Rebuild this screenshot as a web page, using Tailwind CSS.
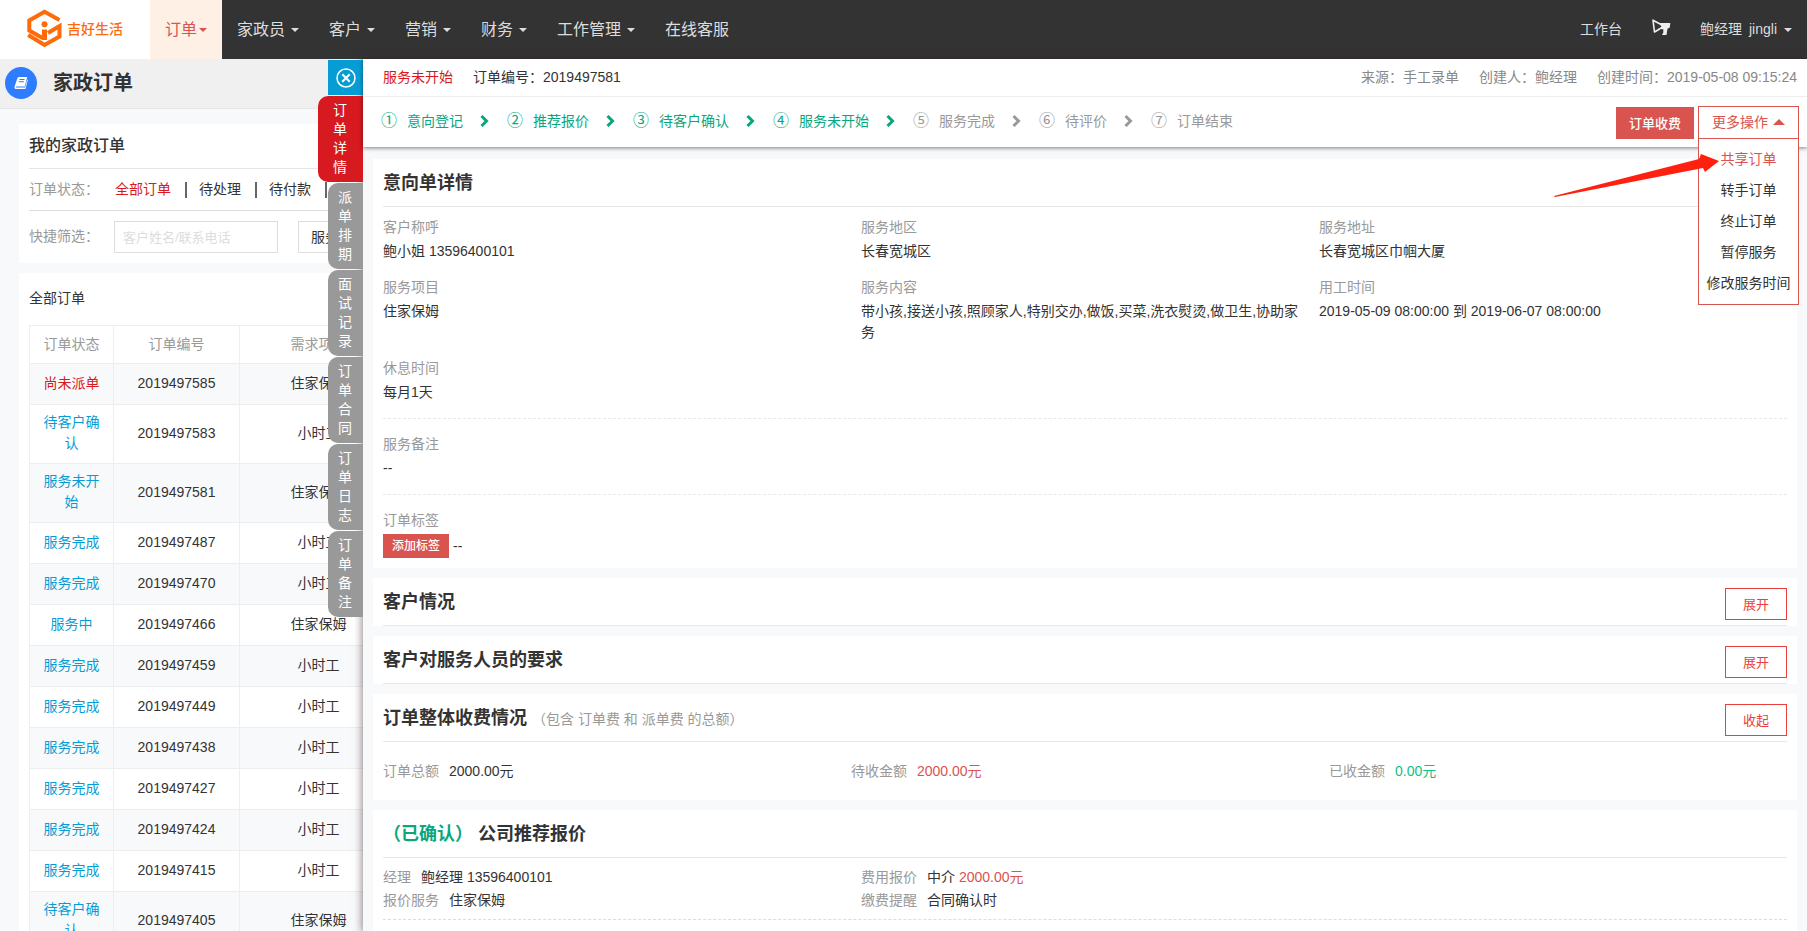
<!DOCTYPE html>
<html lang="zh-CN">
<head>
<meta charset="utf-8">
<title>家政订单</title>
<script src="https://cdn.jsdelivr.net/npm/@tailwindcss/browser@4"></script>
</head>
<body class="flex h-screen flex-col overflow-hidden bg-[#f8f9fb] font-['Liberation_Sans','Noto_Sans_CJK_SC',sans-serif] text-sm leading-[21px] text-[#333]">

<header class="flex h-[59px] shrink-0 items-stretch bg-[#333] text-[#ddd]">
  <a href="#" class="flex w-[150px] items-center gap-[5px] bg-white pb-0.5 pl-[27px] text-[#ff6a0a]">
    <svg class="h-[40px] w-[35px] shrink-0" viewBox="0 0 35 40" fill="none" stroke="#ff6a0a" stroke-width="4">
      <path d="M32.500 11L17.500 2.800L2.300 11.500V21.500L15.500 29"/>
      <path d="M1.200 26L17.500 36L32.500 27.500V17L21 24"/>
      <path stroke-width="5" d="M17.500 20.500V31"/>
      <circle cx="17.500" cy="15.300" r="3" fill="#ff6a0a" stroke="none"/>
    </svg>
    <span class="text-sm font-medium">吉好生活</span>
  </a>
  <nav class="flex flex-1 items-stretch text-base">
    <a href="#" class="flex items-center gap-0.5 bg-[#fff0e6] px-[15px] text-[#d9534f]">订单<svg class="h-1 w-2" viewBox="0 0 8 4" fill="currentColor"><path d="M0 0h8L4 4z"/></svg></a>
    <a href="#" class="flex items-center gap-1.5 px-[15px]">家政员<svg class="h-1 w-2" viewBox="0 0 8 4" fill="currentColor"><path d="M0 0h8L4 4z"/></svg></a>
    <a href="#" class="flex items-center gap-1.5 px-[15px]">客户<svg class="h-1 w-2" viewBox="0 0 8 4" fill="currentColor"><path d="M0 0h8L4 4z"/></svg></a>
    <a href="#" class="flex items-center gap-1.5 px-[15px]">营销<svg class="h-1 w-2" viewBox="0 0 8 4" fill="currentColor"><path d="M0 0h8L4 4z"/></svg></a>
    <a href="#" class="flex items-center gap-1.5 px-[15px]">财务<svg class="h-1 w-2" viewBox="0 0 8 4" fill="currentColor"><path d="M0 0h8L4 4z"/></svg></a>
    <a href="#" class="flex items-center gap-1.5 px-[15px]">工作管理<svg class="h-1 w-2" viewBox="0 0 8 4" fill="currentColor"><path d="M0 0h8L4 4z"/></svg></a>
    <a href="#" class="flex items-center px-[15px]">在线客服</a>
  </nav>
  <div class="flex items-stretch">
    <a href="#" class="flex items-center px-[15px]">工作台</a>
    <a href="#" aria-label="通知" class="flex items-center px-[14px] pb-1">
      <svg class="h-[18px] w-[20px]" viewBox="0 0 20 18" fill="none" stroke="#eee">
        <path stroke-width="1.600" stroke-linejoin="round" d="M9 5L2 1.200L3.500 13L9 9.800"/>
        <path fill="#eee" stroke="none" d="M7.500 4L19.300 4L18.800 8.500L16.500 9.800L15.500 16L11 16L12.300 13.500L12.300 10.300L7.500 10L10.500 7.500z"/>
      </svg>
    </a>
    <a href="#" class="flex items-center gap-[7px] px-[15px]"><span>鲍经理</span><span>jingli</span><svg class="h-1 w-2" viewBox="0 0 8 4" fill="currentColor"><path d="M0 0h8L4 4z"/></svg></a>
  </div>
</header>

<div class="relative min-h-0 flex-1">
  <main class="h-full overflow-hidden">
    <div class="flex h-[50px] items-center gap-4 border-b border-[#e5e5e5] bg-[#f0f0f0] px-[5px] pb-px">
      <span class="flex size-8 items-center justify-center rounded-full bg-[#2f7dff]">
        <svg class="h-3.5 w-3.5" viewBox="0 0 14 14"><path fill="#fff" d="M4.500 1H13.200L10.700 10.500H2.500Q1.500 10.500 2 11.600H11L13.300 3.500L13.900 3.800L11.600 12.500Q11.400 13 10.800 13H1.500Q0 12.500.6 10.500L3.500 2Q3.800 1 4.500 1z"/><path stroke="#2f7dff" d="M5.500 3.500H10.500M4.900 5.700H9.900"/></svg>
      </span>
      <h1 class="text-xl font-bold">家政订单</h1>
    </div>

    <div class="flex flex-col gap-2.5 py-[15px] pr-5 pl-[19px]">
      <section class="bg-white px-2.5 pb-2.5">
        <h2 class="flex h-[45px] items-center border-b border-[#e5e5e5] text-base font-medium">我的家政订单</h2>
        <div class="flex h-[42px] items-center border-b border-[#ddd]">
          <span class="w-[86px] text-[#999]">订单状态：</span>
          <a href="#" class="text-[#d71920]">全部订单</a>
          <span class="mr-3 ml-3.5 h-4 w-0.5 bg-[#666]"></span>
          <a href="#">待处理</a>
          <span class="mr-3 ml-3.5 h-4 w-0.5 bg-[#666]"></span>
          <a href="#">待付款</a>
          <span class="mr-3 ml-3.5 h-4 w-0.5 bg-[#666]"></span>
        </div>
        <div class="flex items-center pt-2.5">
          <label for="q" class="w-[85px] pb-0.5 text-[#999]">快捷筛选：</label>
          <input id="q" type="text" placeholder="客户姓名/联系电话" class="mr-5 h-8 w-[164px] border border-[#ddd] px-2 text-[13px] placeholder:text-[#ddd]">
          <select aria-label="服务" class="h-8 w-[120px] border border-[#ddd] px-2"><option>服务项目</option></select>
        </div>
      </section>

      <section class="bg-white px-2.5 pb-2.5">
        <h2 class="flex h-[52px] items-center pb-0.5">全部订单</h2>
        <table class="w-full table-fixed border-collapse text-center [&_td]:h-[41px] [&_td]:border [&_td]:border-[#eee] [&_td]:px-2 [&_td]:pt-[7px] [&_td]:pb-[9px] [&_th]:h-[38px] [&_th]:border [&_th]:border-[#eee] [&_th]:font-normal [&_th]:text-[#999] [&_tbody_tr:nth-child(odd)]:bg-[#f8f9fb]">
          <colgroup><col class="w-[84px]"><col class="w-[126px]"><col class="w-[158px]"><col></colgroup>
          <thead><tr><th>订单状态</th><th>订单编号</th><th>需求项目</th><th></th></tr></thead>
          <tbody>
            <tr><td class="text-[#d71920]">尚未派单</td><td>2019497585</td><td>住家保姆</td><td></td></tr>
            <tr><td class="text-[#069dd5]">待客户确认</td><td>2019497583</td><td>小时工</td><td></td></tr>
            <tr><td class="text-[#069dd5]">服务未开始</td><td>2019497581</td><td>住家保姆</td><td></td></tr>
            <tr><td class="text-[#069dd5]">服务完成</td><td>2019497487</td><td>小时工</td><td></td></tr>
            <tr><td class="text-[#069dd5]">服务完成</td><td>2019497470</td><td>小时工</td><td></td></tr>
            <tr><td class="text-[#069dd5]">服务中</td><td>2019497466</td><td>住家保姆</td><td></td></tr>
            <tr><td class="text-[#069dd5]">服务完成</td><td>2019497459</td><td>小时工</td><td></td></tr>
            <tr><td class="text-[#069dd5]">服务完成</td><td>2019497449</td><td>小时工</td><td></td></tr>
            <tr><td class="text-[#069dd5]">服务完成</td><td>2019497438</td><td>小时工</td><td></td></tr>
            <tr><td class="text-[#069dd5]">服务完成</td><td>2019497427</td><td>小时工</td><td></td></tr>
            <tr><td class="text-[#069dd5]">服务完成</td><td>2019497424</td><td>小时工</td><td></td></tr>
            <tr><td class="text-[#069dd5]">服务完成</td><td>2019497415</td><td>小时工</td><td></td></tr>
            <tr><td class="text-[#069dd5]">待客户确认</td><td>2019497405</td><td>住家保姆</td><td></td></tr>
          </tbody>
        </table>
      </section>
    </div>
  </main>

  <!-- Order drawer, laid over the list -->
  <aside class="absolute inset-y-0 right-0 left-[363px] flex flex-col bg-[#f8f9fb] shadow-[0_0_8px_1px_rgba(70,50,50,0.6)]">
    <div class="absolute top-px right-full flex flex-col items-end gap-px leading-[19px] text-white">
      <button aria-label="关闭" class="flex size-[35px] items-center justify-center bg-[#069dd5]">
        <svg class="size-5" viewBox="0 0 20 20" fill="none" stroke="#fff" stroke-width="1.500"><circle cx="10" cy="10" r="9"/><path stroke-width="2" d="M6.300 6.300l7.400 7.400M13.700 6.300l-7.400 7.400"/></svg>
      </button>
      <button class="w-[45px] rounded-l-[10px] bg-[#d71920] py-[5px] pr-4 pl-[15px]">订单详情</button>
      <button class="w-[35px] rounded-l-[10px] bg-[#999] py-[5px] pr-[11px] pl-2.5">派单排期</button>
      <button class="w-[35px] rounded-l-[10px] bg-[#999] py-[5px] pr-[11px] pl-2.5">面试记录</button>
      <button class="w-[35px] rounded-l-[10px] bg-[#999] py-[5px] pr-[11px] pl-2.5">订单合同</button>
      <button class="w-[35px] rounded-l-[10px] bg-[#999] py-[5px] pr-[11px] pl-2.5">订单日志</button>
      <button class="w-[35px] rounded-l-[10px] bg-[#999] py-[5px] pr-[11px] pl-2.5">订单备注</button>
    </div>

    <div class="relative z-10 shrink-0 bg-white shadow-[0_1px_4px_rgba(0,0,0,0.5)]">
      <div class="flex h-[38px] items-center border-b border-[#eee] pr-2.5 pl-5">
        <span class="mr-5 text-[#d71920]">服务未开始</span>
        <span>订单编号：2019497581</span>
        <div class="ml-auto flex gap-5 text-[#888]">
          <span>来源：手工录单</span><span>创建人：鲍经理</span><span>创建时间：2019-05-08 09:15:24</span>
        </div>
      </div>
      <div class="flex h-[50px] items-center pr-2 pl-[18px]">
        <ol class="flex items-center gap-[18px] pb-0.5 text-[#999]">
          <li class="flex items-center text-[#0aa67c]"><span class="mr-2.5 text-base">①</span>意向登记<svg class="ml-[17px] h-3 w-[9px]" viewBox="0 0 9 12" fill="none" stroke="currentColor" stroke-width="3"><path d="M1.500 1L6.500 6L1.500 11"/></svg></li>
          <li class="flex items-center text-[#0aa67c]"><span class="mr-2.5 text-base">②</span>推荐报价<svg class="ml-[17px] h-3 w-[9px]" viewBox="0 0 9 12" fill="none" stroke="currentColor" stroke-width="3"><path d="M1.500 1L6.500 6L1.500 11"/></svg></li>
          <li class="flex items-center text-[#0aa67c]"><span class="mr-2.5 text-base">③</span>待客户确认<svg class="ml-[17px] h-3 w-[9px]" viewBox="0 0 9 12" fill="none" stroke="currentColor" stroke-width="3"><path d="M1.500 1L6.500 6L1.500 11"/></svg></li>
          <li class="flex items-center text-[#0aa67c]"><span class="mr-2.5 text-base">④</span>服务未开始<svg class="ml-[17px] h-3 w-[9px]" viewBox="0 0 9 12" fill="none" stroke="currentColor" stroke-width="3"><path d="M1.500 1L6.500 6L1.500 11"/></svg></li>
          <li class="flex items-center"><span class="mr-2.5 text-base">⑤</span>服务完成<svg class="ml-[17px] h-3 w-[9px]" viewBox="0 0 9 12" fill="none" stroke="currentColor" stroke-width="3"><path d="M1.500 1L6.500 6L1.500 11"/></svg></li>
          <li class="flex items-center"><span class="mr-2.5 text-base">⑥</span>待评价<svg class="ml-[17px] h-3 w-[9px]" viewBox="0 0 9 12" fill="none" stroke="currentColor" stroke-width="3"><path d="M1.500 1L6.500 6L1.500 11"/></svg></li>
          <li class="flex items-center"><span class="mr-2.5 text-base">⑦</span>订单结束</li>
        </ol>
        <button class="mt-0.5 ml-auto h-8 w-[78px] bg-[#d9534f] text-[13px] font-medium text-white">订单收费</button>
        <div class="relative ml-1">
          <button class="flex h-[33px] w-[101px] items-center justify-center gap-[5px] border border-[#d9534f] bg-white text-[#d9534f]">更多操作<svg class="h-1.5 w-3" viewBox="0 0 12 6" fill="currentColor"><path d="M0 6h12L6 0z"/></svg></button>
          <ul class="absolute inset-x-0 top-8 border border-[#d9534f] bg-white py-[5px] text-center leading-[31px] whitespace-nowrap">
            <li><a href="#" class="text-[#d9534f]">共享订单</a></li>
            <li><a href="#">转手订单</a></li>
            <li><a href="#">终止订单</a></li>
            <li><a href="#">暂停服务</a></li>
            <li><a href="#">修改服务时间</a></li>
          </ul>
          <svg class="absolute top-[48px] right-[80px] h-11 w-[165px]" viewBox="0 0 165 44" fill="#ff2010"><path d="M0 42L145 5L147 0L165 7L151 18L149 14L1 43z"/></svg>
        </div>
      </div>
    </div>

    <div class="flex min-h-0 flex-1 flex-col gap-2.5 overflow-hidden px-2.5 pt-3 *:shrink-0">
      <section class="bg-white px-2.5 pb-2.5">
        <h2 class="flex h-12 items-center border-b border-[#e8e8e8] text-lg font-bold">意向单详情</h2>
        <dl class="grid grid-cols-[478fr_458fr_468fr] gap-y-[15px] border-b border-dashed border-[#e8e8e8] pt-2.5 pb-[15px] [&_dd]:mt-[3px] [&_dd]:pr-3 [&_dt]:text-[#999]">
          <div><dt>客户称呼</dt><dd>鲍小姐 13596400101</dd></div>
          <div><dt>服务地区</dt><dd>长春宽城区</dd></div>
          <div><dt>服务地址</dt><dd>长春宽城区巾帼大厦</dd></div>
          <div><dt>服务项目</dt><dd>住家保姆</dd></div>
          <div><dt>服务内容</dt><dd>带小孩,接送小孩,照顾家人,特别交办,做饭,买菜,洗衣熨烫,做卫生,协助家务</dd></div>
          <div><dt>用工时间</dt><dd>2019-05-09 08:00:00 到 2019-06-07 08:00:00</dd></div>
          <div><dt>休息时间</dt><dd>每月1天</dd></div>
        </dl>
        <dl class="border-b border-dashed border-[#e8e8e8] py-[15px]"><dt class="text-[#999]">服务备注</dt><dd class="mt-[3px]">--</dd></dl>
        <dl class="pt-[15px]"><dt class="text-[#999]">订单标签</dt><dd class="mt-[3px] flex items-center gap-1"><button class="h-6 w-[66px] bg-[#d9534f] text-xs font-medium text-white">添加标签</button>--</dd></dl>
      </section>

      <section class="bg-white px-2.5">
        <div class="flex h-12 items-center justify-between border-b border-[#e8e8e8]"><h2 class="text-lg font-bold">客户情况</h2><button class="mt-[5px] h-8 w-[62px] border border-[#e8403c] text-[13px] text-[#e8403c]">展开</button></div>
      </section>
      <section class="bg-white px-2.5">
        <div class="flex h-12 items-center justify-between border-b border-[#e8e8e8]"><h2 class="text-lg font-bold">客户对服务人员的要求</h2><button class="mt-[5px] h-8 w-[62px] border border-[#e8403c] text-[13px] text-[#e8403c]">展开</button></div>
      </section>
      <section class="bg-white px-2.5">
        <div class="flex h-12 items-center justify-between border-b border-[#e8e8e8]"><h2 class="text-lg font-bold">订单整体收费情况 <span class="text-sm font-normal text-[#999]">（包含 订单费 和 派单费 的总额）</span></h2><button class="mt-[5px] h-8 w-[62px] border border-[#e8403c] text-[13px] text-[#e8403c]">收起</button></div>
        <dl class="grid h-[58px] grid-cols-[468fr_478fr_458fr] items-center *:flex *:gap-2.5 [&_dt]:text-[#999]">
          <div><dt>订单总额</dt><dd>2000.00元</dd></div>
          <div><dt>待收金额</dt><dd class="text-[#d9534f]">2000.00元</dd></div>
          <div><dt>已收金额</dt><dd class="text-[#0fbf83]">0.00元</dd></div>
        </dl>
      </section>
      <section class="bg-white px-2.5 pb-2.5">
        <h2 class="flex h-12 items-center gap-[5px] border-b border-[#e8e8e8] text-lg font-bold"><span class="text-[#0aa67c]">（已确认）</span>公司推荐报价</h2>
        <dl class="grid grid-cols-[478fr_926fr] gap-y-0.5 border-b border-dashed border-[#ddd] pt-[9px] pb-2 *:flex *:gap-2.5 [&_dt]:text-[#999]">
          <div><dt>经理</dt><dd>鲍经理 13596400101</dd></div>
          <div><dt>费用报价</dt><dd>中介 <span class="text-[#d9534f]">2000.00元</span></dd></div>
          <div><dt>报价服务</dt><dd>住家保姆</dd></div>
          <div><dt>缴费提醒</dt><dd>合同确认时</dd></div>
        </dl>
        <div class="h-10"></div>
      </section>
    </div>
  </aside>
</div>
</body>
</html>
